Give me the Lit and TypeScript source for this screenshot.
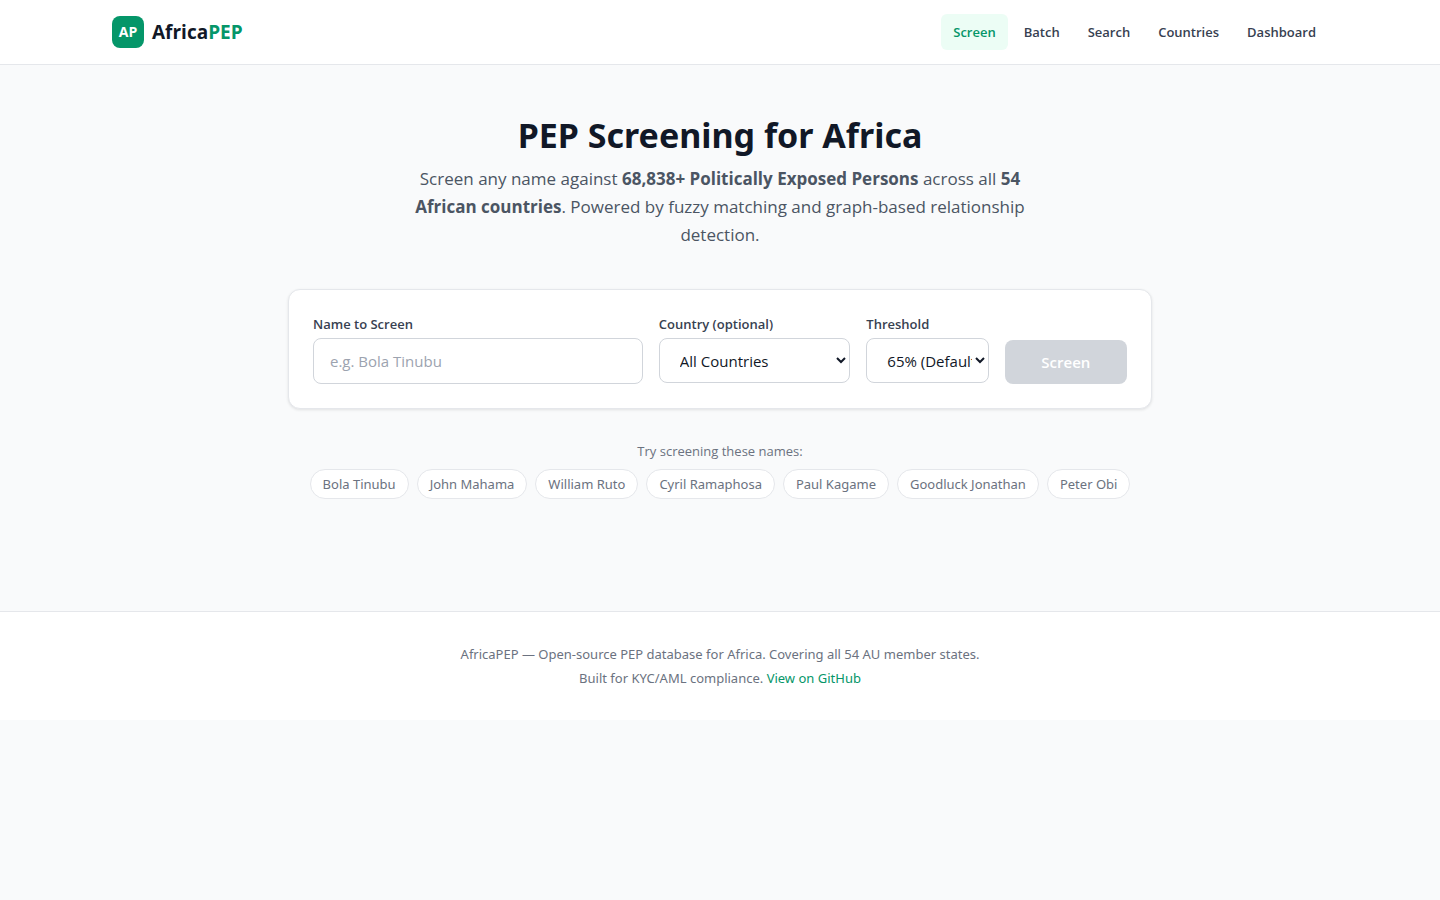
import { LitElement, html, css } from "lit";
import { customElement, state } from "lit/decorators.js";

const NAV = ["Screen", "Batch", "Search", "Countries", "Dashboard"];
const SAMPLES = [
  "Bola Tinubu",
  "John Mahama",
  "William Ruto",
  "Cyril Ramaphosa",
  "Paul Kagame",
  "Goodluck Jonathan",
  "Peter Obi",
];

@customElement("app-root")
export class AppRoot extends LitElement {
  @state() private name = "";

  static styles = css`
    :host {
      display: block;
      min-height: 100vh;
      background: #f9fafb;
      color: #111827;
      font-family: "Segoe UI", "Open Sans", "Noto Sans", sans-serif;
      font-size: 16px;
      line-height: 24px;
    }
    *,
    *::before {
      box-sizing: border-box;
    }
    h1,
    p {
      margin: 0;
    }
    a {
      text-decoration: none;
    }
    .header {
      background: #fff;
      border-bottom: 1px solid #e5e7eb;
    }
    .bar {
      display: flex;
      align-items: center;
      justify-content: space-between;
      max-width: 1280px;
      height: 64px;
      margin: 0 auto;
      padding: 0 32px;
    }
    .brand {
      display: flex;
      align-items: center;
      gap: 8px;
      color: #111827;
      font-size: 19px;
      line-height: 28px;
      font-weight: 700;
    }
    .mark {
      display: grid;
      place-items: center;
      width: 32px;
      height: 32px;
      border-radius: 8px;
      background: #059669;
      color: #fff;
      font-size: 14px;
      line-height: 20px;
    }
    .accent {
      color: #059669;
    }
    .nav {
      display: flex;
      gap: 4px;
    }
    .nav a {
      padding: 8px 12px;
      border-radius: 6px;
      color: #374151;
      font-size: 13px;
      line-height: 20px;
      font-weight: 600;
    }
    .nav a.active {
      background: #ecfdf5;
      color: #059669;
    }
    .main {
      max-width: 928px;
      margin: 0 auto;
      padding: 48px 32px 112px;
    }
    .hero {
      text-align: center;
    }
    .hero h1 {
      font-family: "Segoe UI", "Noto Sans", "Open Sans", sans-serif;
      font-size: 34px;
      line-height: 44px;
      font-weight: 700;
    }
    .hero p {
      max-width: 672px;
      margin: 8px auto 40px;
      padding: 0 24px;
      color: #4b5563;
      font-size: 17px;
      line-height: 28px;
    }
    .card {
      display: grid;
      grid-template-columns: repeat(12, minmax(0, 1fr));
      gap: 16px;
      padding: 24px;
      border: 1px solid #e5e7eb;
      border-radius: 12px;
      background: #fff;
      box-shadow: 0 1px 3px rgba(0, 0, 0, 0.1);
    }
    .field {
      display: flex;
      flex-direction: column;
      gap: 4px;
    }
    .wide {
      grid-column: span 5;
    }
    .medium {
      grid-column: span 3;
    }
    .small {
      grid-column: span 2;
    }
    .end {
      justify-content: flex-end;
    }
    label {
      color: #374151;
      font-size: 13px;
      line-height: 20px;
      font-weight: 600;
    }
    input,
    select {
      width: 100%;
      height: 46px;
      padding: 0 16px;
      border: 1px solid #d1d5db;
      border-radius: 8px;
      background: #fff;
      color: #111827;
      font-family: inherit;
      font-size: 15px;
    }
    select {
      height: 45px;
      padding-right: 0;
    }
    input::placeholder {
      color: #9ca3af;
      opacity: 1;
    }
    .submit {
      height: 44px;
      border: 0;
      border-radius: 8px;
      background: #059669;
      color: #fff;
      font-family: inherit;
      font-size: 15px;
      font-weight: 600;
    }
    .submit:disabled {
      background: #d1d5db;
    }
    .samples {
      margin-top: 32px;
      text-align: center;
      color: #6b7280;
      font-size: 13px;
      line-height: 20px;
    }
    .chips {
      display: flex;
      flex-wrap: wrap;
      justify-content: center;
      gap: 8px;
      margin-top: 8px;
    }
    .chip {
      padding: 4px 12px;
      border: 1px solid #e5e7eb;
      border-radius: 15px;
      background: #fff;
      color: #6b7280;
      font-family: "Segoe UI", "Noto Sans", "Open Sans", sans-serif;
      font-size: 13px;
      line-height: 20px;
    }
    .footer {
      display: flex;
      flex-direction: column;
      gap: 4px;
      padding: 32px;
      border-top: 1px solid #e5e7eb;
      background: #fff;
      color: #6b7280;
      text-align: center;
      font-family: "Segoe UI", "Noto Sans", "Open Sans", sans-serif;
      font-size: 13px;
      line-height: 20px;
    }
    .footer a {
      color: #059669;
    }
  `;

  render() {
    return html`
      <header class="header">
        <div class="bar">
          <a class="brand" href="#">
            <span class="mark">AP</span>
            <span>Africa<span class="accent">PEP</span></span>
          </a>
          <nav class="nav">
            ${NAV.map(
              (item, i) =>
                html`<a class=${i === 0 ? "active" : ""} href="#">${item}</a>`
            )}
          </nav>
        </div>
      </header>
      <main class="main">
        <section class="hero">
          <h1>PEP Screening for Africa</h1>
          <p>
            Screen any name against
            <strong>68,838+ Politically Exposed Persons</strong> across all
            <strong>54 African countries</strong>. Powered by fuzzy matching and
            graph-based relationship detection.
          </p>
        </section>
        <form class="card" @submit=${(e: Event) => e.preventDefault()}>
          <div class="field wide">
            <label for="name">Name to Screen</label>
            <input
              id="name"
              type="text"
              placeholder="e.g. Bola Tinubu"
              .value=${this.name}
              @input=${(e: Event) =>
                (this.name = (e.target as HTMLInputElement).value)}
            />
          </div>
          <div class="field medium">
            <label for="country">Country (optional)</label>
            <select id="country">
              <option>All Countries</option>
            </select>
          </div>
          <div class="field small">
            <label for="threshold">Threshold</label>
            <select id="threshold">
              <option>65% (Default)</option>
            </select>
          </div>
          <div class="field small end">
            <button class="submit" type="submit" ?disabled=${!this.name.trim()}>
              Screen
            </button>
          </div>
        </form>
        <section class="samples">
          <p>Try screening these names:</p>
          <div class="chips">
            ${SAMPLES.map(
              (s) => html`<button
                class="chip"
                type="button"
                @click=${() => (this.name = s)}
              >
                ${s}
              </button>`
            )}
          </div>
        </section>
      </main>
      <footer class="footer">
        <p>
          AfricaPEP — Open-source PEP database for Africa. Covering all 54 AU
          member states.
        </p>
        <p>Built for KYC/AML compliance. <a href="#">View on GitHub</a></p>
      </footer>
    `;
  }
}
